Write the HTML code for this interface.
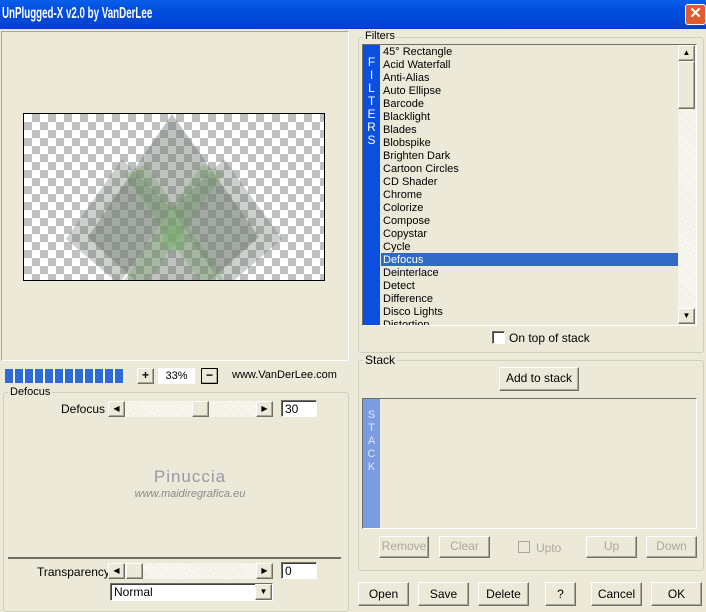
<!DOCTYPE html>
<html><head><style>
*{margin:0;padding:0;box-sizing:border-box}
body{width:706px;height:606px;background:#ECE9D8;font-family:"Liberation Sans",sans-serif;font-size:11px;color:#000;position:relative;overflow:hidden}
.a{position:absolute}
.title{left:0;top:0;width:706px;height:29px;background:linear-gradient(#0A5FE8,#0050E0 30%,#0046D4 80%,#0040C0)}
.tt{left:2px;top:5px;color:#fff;font-size:16px;font-weight:bold;transform:scaleX(0.61);transform-origin:0 0;white-space:nowrap}
.x{left:685px;top:4px;width:21px;height:21px;background:#E25B2E;border:1px solid #fff;border-radius:3px;color:#fff;font-size:15px;text-align:center;line-height:18px;font-weight:bold}
.sunk{border:1px solid;border-color:#ACA899 #fff #fff #ACA899}
.grp{border:1px solid #D0D0BF;border-radius:3px}
.lg{background:#ECE9D8;padding:0 2px;font-size:11px}
.btn{background:#ECE9D8;border:1px solid;border-color:#fff #716F64 #716F64 #fff;box-shadow:inset -1px -1px 0 #ACA899;text-align:center;font-size:12px}
.dis{color:#ACA899}
.inp{background:#fff;border:1px solid;border-color:#716F64 #fff #fff #716F64;box-shadow:inset 1px 1px 0 #404040;font-size:12px;padding:1px 0 0 3px}
.trk{background:repeating-linear-gradient(45deg,#ECE9D8 0 1px,#fff 1px 2px)}
.sb{width:17px;height:16px}
</style></head><body>
<div class="a title"></div>
<div class="a tt">UnPlugged-X v2.0 by VanDerLee</div>
<div class="a x">✕</div>

<div class="a sunk" style="left:1px;top:31px;width:348px;height:330px"></div>
<div class="a" style="left:23px;top:113px;width:302px;height:168px;border:1px solid #000;background-color:#fff;background-image:linear-gradient(45deg,#c0c0c0 25%,transparent 25%,transparent 75%,#c0c0c0 75%),linear-gradient(45deg,#c0c0c0 25%,transparent 25%,transparent 75%,#c0c0c0 75%);background-size:16px 16px;background-position:0 0,8px 8px;overflow:hidden">
<svg width="300" height="166" style="position:absolute;left:0;top:0">
<polygon points="148,0 235,123 148,200 64,123" fill="#707a70" fill-opacity="0.45"/>
<polygon points="98,45 148,95 95,170 42,125" fill="#707a70" fill-opacity="0.35"/>
<polygon points="200,45 258,125 200,175 148,95" fill="#707a70" fill-opacity="0.35"/>
<polygon points="100,60 122,50 200,166 175,166" fill="#6a9a5a" fill-opacity="0.3"/>
<polygon points="200,60 178,50 100,166 125,166" fill="#6a9a5a" fill-opacity="0.3"/>
<circle cx="150" cy="125" r="12" fill="#7ab070" fill-opacity="0.5"/>
</svg></div>

<div class="a" style="left:5px;top:369px;width:118px;height:14px;background:repeating-linear-gradient(90deg,#2E6BD6 0 8px,#fff 8px 10px)"></div>
<div class="a btn" style="left:137px;top:368px;width:17px;height:16px;line-height:13px;font-weight:bold">+</div>
<div class="a" style="left:158px;top:368px;width:37px;height:16px;background:#fff;text-align:center;font-size:11px;line-height:16px">33%</div>
<div class="a btn" style="left:201px;top:368px;width:17px;height:16px;line-height:13px;border:1px solid #000;font-weight:bold">−</div>
<div class="a" style="left:232px;top:369px;font-size:11px">www.VanDerLee.com</div>

<div class="a grp" style="left:3px;top:392px;width:346px;height:220px"></div>
<div class="a lg" style="left:8px;top:386px">Defocus</div>
<div class="a" style="left:61px;top:402px;font-size:12px">Defocus</div>
<div class="a trk" style="left:108px;top:401px;width:165px;height:16px"></div>
<div class="a btn sb" style="left:108px;top:401px;font-size:8px;line-height:14px">◀</div>
<div class="a btn sb" style="left:192px;top:401px"></div>
<div class="a btn sb" style="left:256px;top:401px;font-size:8px;line-height:14px">▶</div>
<div class="a inp" style="left:281px;top:400px;width:36px;height:17px">30</div>
<div class="a" style="left:100px;top:467px;width:180px;text-align:center;color:#9898A8;font-size:17px;letter-spacing:1px">Pinuccia</div>
<div class="a" style="left:100px;top:488px;width:180px;text-align:center;color:#8a8a8a;font-size:11px;font-style:italic">www.maidiregrafica.eu</div>
<div class="a" style="left:8px;top:557px;width:333px;height:2px;background:#716F64"></div>
<div class="a" style="left:37px;top:565px;font-size:12px">Transparency</div>
<div class="a trk" style="left:108px;top:563px;width:165px;height:16px"></div>
<div class="a btn sb" style="left:108px;top:563px;font-size:8px;line-height:14px">◀</div>
<div class="a btn sb" style="left:126px;top:563px"></div>
<div class="a btn sb" style="left:256px;top:563px;font-size:8px;line-height:14px">▶</div>
<div class="a inp" style="left:281px;top:562px;width:36px;height:17px">0</div>
<div class="a inp" style="left:110px;top:583px;width:163px;height:18px">Normal</div>
<div class="a btn sb" style="left:255px;top:584px;font-size:8px;line-height:14px">▼</div>

<div class="a grp" style="left:358px;top:37px;width:346px;height:316px"></div>
<div class="a lg" style="left:363px;top:30px">Filters</div>
<div class="a sunk" style="left:362px;top:44px;width:335px;height:282px;border-color:#716F64 #fff #fff #716F64"></div>
<div class="a" style="left:363px;top:45px;width:17px;height:280px;background:#0A4FDF;color:#fff;font-size:12px;text-align:center;line-height:13px;padding-top:11px">F<br>I<br>L<br>T<br>E<br>R<br>S</div>
<div class="a" style="left:381px;top:253px;width:297px;height:13px;background:#316AC5"></div>
<div class="a" style="left:381px;top:45px;width:297px;height:280px;overflow:hidden">
<div style="position:relative;left:2px;top:1px;line-height:13px;font-size:11px">45° Rectangle<br>Acid Waterfall<br>Anti-Alias<br>Auto Ellipse<br>Barcode<br>Blacklight<br>Blades<br>Blobspike<br>Brighten Dark<br>Cartoon Circles<br>CD Shader<br>Chrome<br>Colorize<br>Compose<br>Copystar<br>Cycle<br><span style="color:#fff">Defocus</span><br>Deinterlace<br>Detect<br>Difference<br>Disco Lights<br>Distortion</div></div>
<div class="a trk" style="left:678px;top:45px;width:18px;height:280px"></div>
<div class="a btn sb" style="left:678px;top:45px;font-size:8px;line-height:14px">▲</div>
<div class="a btn" style="left:678px;top:61px;width:17px;height:48px"></div>
<div class="a btn sb" style="left:678px;top:308px;font-size:8px;line-height:14px">▼</div>
<div class="a inp" style="left:492px;top:331px;width:13px;height:13px;padding:0"></div>
<div class="a" style="left:509px;top:331px;font-size:12px">On top of stack</div>

<div class="a grp" style="left:358px;top:360px;width:346px;height:211px"></div>
<div class="a lg" style="left:363px;top:353px;font-size:12px">Stack</div>
<div class="a btn" style="left:499px;top:367px;width:80px;height:24px;line-height:21px">Add to stack</div>
<div class="a sunk" style="left:362px;top:398px;width:335px;height:131px;border-color:#716F64 #fff #fff #716F64"></div>
<div class="a" style="left:363px;top:399px;width:17px;height:129px;background:#7B9CE0;color:#dfe6f8;font-size:11px;text-align:center;line-height:13px;padding-top:10px">S<br>T<br>A<br>C<br>K</div>
<div class="a btn dis" style="left:379px;top:536px;width:50px;height:22px;line-height:19px">Remove</div>
<div class="a btn dis" style="left:439px;top:536px;width:51px;height:22px;line-height:19px">Clear</div>
<div class="a" style="left:518px;top:541px;width:12px;height:12px;border:1px solid #ACA899"></div>
<div class="a dis" style="left:536px;top:541px;font-size:12px">Upto</div>
<div class="a btn dis" style="left:586px;top:536px;width:51px;height:22px;line-height:19px">Up</div>
<div class="a btn dis" style="left:646px;top:536px;width:51px;height:22px;line-height:19px">Down</div>

<div class="a btn" style="left:358px;top:582px;width:51px;height:24px;line-height:22px">Open</div>
<div class="a btn" style="left:418px;top:582px;width:51px;height:24px;line-height:22px">Save</div>
<div class="a btn" style="left:478px;top:582px;width:51px;height:24px;line-height:22px">Delete</div>
<div class="a btn" style="left:545px;top:582px;width:31px;height:24px;line-height:22px">?</div>
<div class="a btn" style="left:591px;top:582px;width:51px;height:24px;line-height:22px">Cancel</div>
<div class="a btn" style="left:651px;top:582px;width:51px;height:24px;line-height:22px">OK</div>
</body></html>
